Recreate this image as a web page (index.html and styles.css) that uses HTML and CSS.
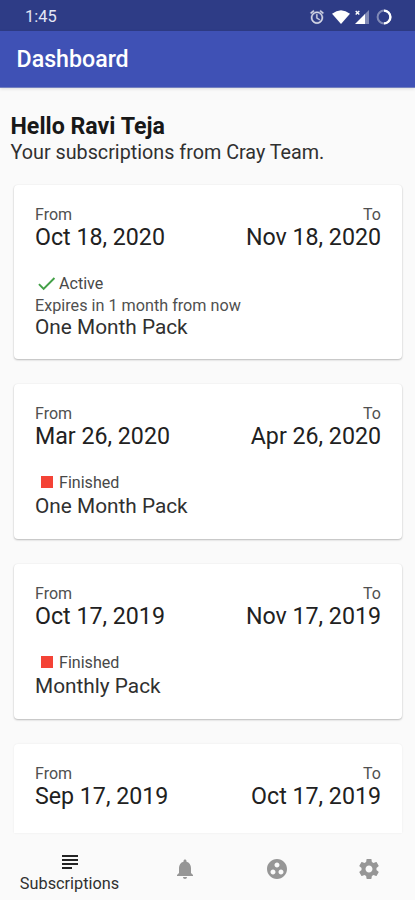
FILE: index.html
```html
<!DOCTYPE html>
<html lang="en">
<head>
<meta charset="utf-8">
<title>Dashboard</title>
<link rel="stylesheet" href="styles.css">
</head>
<body>
<div class="app">
  <div class="status">
    <span class="clock">1:45</span>
    <div class="status-icons">
      <svg class="i-alarm" viewBox="0 0 24 24"><path d="M22 5.72l-4.6-3.86-1.29 1.53 4.6 3.86L22 5.72zM7.88 3.39L6.6 1.86 2 5.71l1.29 1.53 4.59-3.85zM12.5 8H11v6l4.75 2.85.75-1.23-4-2.37V8zM12 4c-4.97 0-9 4.03-9 9s4.02 9 9 9c4.97 0 9-4.03 9-9s-4.03-9-9-9zm0 16c-3.87 0-7-3.13-7-7s3.13-7 7-7 7 3.13 7 7-3.13 7-7 7z" stroke="#fff" stroke-width=".6"/></svg>
      <svg class="i-wifi" viewBox="0 0 18 14"><path d="M0 3.8Q9-3.2 18 3.8L9 14z"/></svg>
      <svg class="i-signal" viewBox="0 0 14 14"><path d="M14 0v14H9.5V4.5z" opacity=".4"/><path d="M10 4v10H0z"/><path d="M.7.9l3.6 3.6M4.3.9L.7 4.5" stroke="#fff" stroke-width="1.4"/></svg>
      <svg class="i-ring" viewBox="0 0 16 16"><circle cx="8" cy="8" r="6.4" fill="none" stroke="#fff" stroke-opacity=".4" stroke-width="2"/><path d="M8 1.6a6.4 6.4 0 0 1 0 12.8" fill="none" stroke="#fff" stroke-width="2.4"/></svg>
    </div>
  </div>
  <header class="bar">Dashboard</header>
  <main class="content">
    <h1>Hello Ravi Teja</h1>
    <p class="intro">Your subscriptions from Cray Team.</p>
    <section class="card active">
      <div class="dates">
        <div><div class="label">From</div><div class="date">Oct 18, 2020</div></div>
        <div class="to"><div class="label">To</div><div class="date">Nov 18, 2020</div></div>
      </div>
      <div class="state"><svg class="check" viewBox="0 0 24 24"><path d="M9 16.17L4.83 12l-1.42 1.41L9 19 21 7l-1.41-1.41z"/></svg>Active</div>
      <div class="expires">Expires in 1 month from now</div>
      <div class="pack">One Month Pack</div>
    </section>
    <section class="card">
      <div class="dates">
        <div><div class="label">From</div><div class="date">Mar 26, 2020</div></div>
        <div class="to"><div class="label">To</div><div class="date">Apr 26, 2020</div></div>
      </div>
      <div class="state"><span class="stop"></span>Finished</div>
      <div class="pack">One Month Pack</div>
    </section>
    <section class="card">
      <div class="dates">
        <div><div class="label">From</div><div class="date">Oct 17, 2019</div></div>
        <div class="to"><div class="label">To</div><div class="date">Nov 17, 2019</div></div>
      </div>
      <div class="state"><span class="stop"></span>Finished</div>
      <div class="pack">Monthly Pack</div>
    </section>
    <section class="card last">
      <div class="dates">
        <div><div class="label">From</div><div class="date">Sep 17, 2019</div></div>
        <div class="to"><div class="label">To</div><div class="date">Oct 17, 2019</div></div>
      </div>
    </section>
  </main>
  <nav class="tabs">
    <div class="tab selected"><svg viewBox="0 0 24 24"><path d="M14 17H4v2h10v-2zm6-8H4v2h16V9zM4 15h16v-2H4v2zM4 5v2h16V5H4z"/></svg><span>Subscriptions</span></div>
    <div class="tab"><svg viewBox="0 0 24 24"><path d="M12 22c1.1 0 2-.9 2-2h-4c0 1.1.89 2 2 2zm6-6v-5c0-3.07-1.64-5.64-4.5-6.32V4c0-.83-.67-1.5-1.5-1.5s-1.5.67-1.5 1.5v.68C7.63 5.36 6 7.92 6 11v5l-2 2v1h16v-1l-2-2z"/></svg></div>
    <div class="tab"><svg viewBox="0 0 24 24"><path d="M12 2C6.48 2 2 6.48 2 12s4.48 10 10 10 10-4.48 10-10S17.52 2 12 2zM8 17.5c-1.38 0-2.5-1.12-2.5-2.5s1.12-2.5 2.5-2.5 2.5 1.12 2.5 2.5-1.12 2.5-2.5 2.5zM9.5 8c0-1.38 1.12-2.5 2.5-2.5s2.5 1.12 2.5 2.5-1.12 2.5-2.5 2.5S9.5 9.38 9.5 8zm6.5 9.5c-1.38 0-2.5-1.12-2.5-2.5s1.12-2.5 2.5-2.5 2.5 1.12 2.5 2.5-1.12 2.5-2.5 2.5z"/></svg></div>
    <div class="tab"><svg viewBox="0 0 24 24"><path d="M19.43 12.98c.04-.32.07-.64.07-.98s-.03-.66-.07-.98l2.11-1.65c.19-.15.24-.42.12-.64l-2-3.46c-.12-.22-.39-.3-.61-.22l-2.49 1c-.52-.4-1.08-.73-1.69-.98l-.38-2.65C14.46 2.18 14.25 2 14 2h-4c-.25 0-.46.18-.49.42l-.38 2.65c-.61.25-1.17.59-1.69.98l-2.49-1c-.23-.09-.49 0-.61.22l-2 3.46c-.13.22-.07.49.12.64l2.11 1.65c-.04.32-.07.65-.07.98s.03.66.07.98l-2.11 1.65c-.19.15-.24.42-.12.64l2 3.46c.12.22.39.3.61.22l2.49-1c.52.4 1.08.73 1.69.98l.38 2.65c.03.24.24.42.49.42h4c.25 0 .46-.18.49-.42l.38-2.65c.61-.25 1.17-.59 1.69-.98l2.49 1c.23.09.49 0 .61-.22l2-3.46c.12-.22.07-.49-.12-.64l-2.11-1.65zM12 15.5c-1.93 0-3.5-1.57-3.5-3.5s1.57-3.5 3.5-3.5 3.5 1.57 3.5 3.5-1.57 3.5-3.5 3.5z"/></svg></div>
  </nav>
</div>
</body>
</html>
```
FILE: styles.css
```css
* { box-sizing: border-box; }
body { margin: 0; background: #fafafa; color: #212121; font-family: Roboto, sans-serif; }
.app { display: flex; flex-direction: column; width: 415px; height: 900px; overflow: hidden; }
.status { flex: none; height: 31px; background: #2e3c86; display: flex; justify-content: space-between; align-items: center; padding: 2px 23px 0 25px; color: #e4e7f5; }
.clock { font-size: 16.4px; line-height: 20px; }
.status-icons { display: flex; align-items: center; }
.status svg { display: block; fill: #fff; }
.i-alarm { width: 16px; height: 16px; opacity: .8; margin-right: 7px; }
.i-wifi { width: 18px; height: 14px; margin-right: 5px; }
.i-signal { width: 14px; height: 14px; margin-right: 7px; }
.i-ring { width: 16px; height: 16px; }
.bar { flex: none; height: 57px; background: #3f51b5; color: #fff; font-size: 23.2px; font-weight: 500; line-height: 57px; padding-left: 16.5px; border-bottom: 1px solid #7380bf; box-shadow: 0 1px 3px rgba(0,0,0,.12); }
.content { flex: 1; min-height: 0; overflow: hidden; padding: 25px 13px 0 14px; }
h1 { margin: 0 0 0 -3.5px; font-size: 23.2px; line-height: 27px; font-weight: 700; color: #181818; }
.intro { margin: 0 0 20px -3.5px; font-size: 19.75px; line-height: 25px; color: #303030; }
.card { height: 155px; background: #fff; border-radius: 4px; padding: 20px 21px 0; margin-bottom: 25px; box-shadow: 0 1px 2px rgba(0,0,0,.25), 0 0 2px rgba(0,0,0,.05); }
.card.active { height: 174px; }
.card.last { height: 89px; margin: 0; border-radius: 4px 4px 0 0; box-shadow: 0 0 2px rgba(0,0,0,.08); }
.dates { display: flex; justify-content: space-between; }
.to { text-align: right; }
.label { font-size: 16px; line-height: 20px; color: #505050; }
.date { font-size: 23.2px; line-height: 24px; white-space: nowrap; }
.state { display: flex; align-items: center; height: 22px; margin-top: 23px; font-size: 16.1px; color: #484848; }
.check { width: 23px; height: 23px; margin-right: 1px; fill: #43a047; }
.stop { width: 12px; height: 12px; background: #f44336; margin: 0 6px 0 6px; }
.expires { font-size: 16.2px; line-height: 23px; color: #505050; }
.pack { font-size: 20.8px; line-height: 26px; color: #303030; }
.active .pack { line-height: 21px; }
.tabs { flex: none; height: 60px; display: flex; background: #fafafa; }
.tab { width: 92px; display: flex; flex-direction: column; align-items: center; padding-top: 17px; }
.tab svg { width: 24px; height: 24px; fill: #969696; display: block; }
.tab.selected { width: 139px; padding-top: 10px; }
.tab.selected svg { fill: #242424; }
.tab span { font-size: 16.3px; line-height: 20px; color: #303030; }
```
